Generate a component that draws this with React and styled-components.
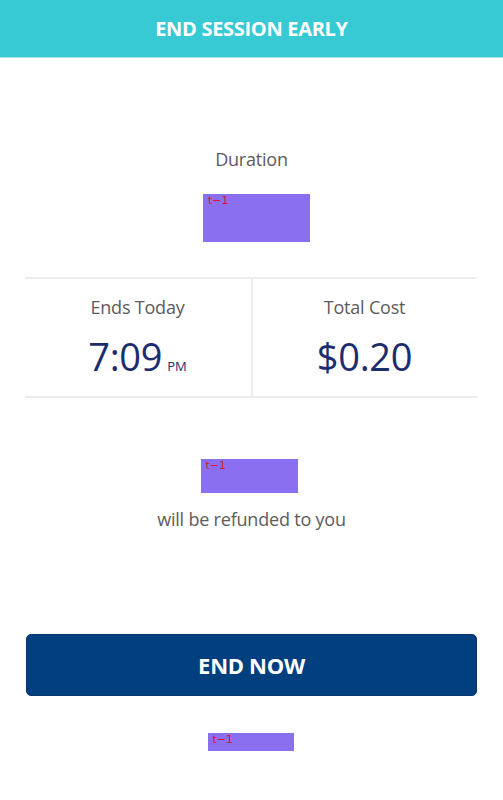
import React from 'react';
import styled, { createGlobalStyle } from 'styled-components';

const Global = createGlobalStyle`
  body {
    margin: 0;
    background: #ffffff;
    font-family: "Open Sans", "Noto Sans", sans-serif;
  }
`;

const Page = styled.div`
  width: 503px;
  min-height: 800px;
  display: flex;
  flex-direction: column;
  align-items: center;
`;

const Header = styled.div`
  width: 100%;
  height: 58px;
  background: #37c9d4;
  border-bottom: 1px solid #a6e6ea;
  box-sizing: border-box;
  display: flex;
  align-items: center;
  justify-content: center;
  color: #ffffff;
  font-weight: 700;
  font-size: 20px;
  letter-spacing: -0.3px;
`;

const Label = styled.div`
  color: #5c5c5c;
  font-size: 18px;
  line-height: 24px;
  letter-spacing: -0.2px;
  margin-top: ${p => p.$top || 0}px;
`;

const Masked = styled.div`
  width: ${p => p.$w}px;
  height: ${p => p.$h}px;
  background: #8a70f0;
  margin-top: ${p => p.$top}px;
  margin-left: ${p => p.$shift || 0}px;
  box-sizing: border-box;
  padding: 1px 0 0 5px;
  color: #e0102a;
  font-family: "DejaVu Sans", sans-serif;
  font-size: 11px;
  line-height: 12px;
`;

const Stats = styled.div`
  width: 452px;
  margin-top: 35px;
  margin-left: -2px;
  height: 121px;
  display: grid;
  grid-template-columns: 1fr 1fr;
  border-top: 2px solid #ececec;
  border-bottom: 2px solid #ececec;
  box-sizing: border-box;
`;

const Cell = styled.div`
  display: flex;
  flex-direction: column;
  align-items: center;
  padding-top: 16px;
  border-left: ${p => (p.$divided ? '2px solid #ececec' : 'none')};
`;

const Value = styled.div`
  color: #1c2d6e;
  font-size: 38px;
  line-height: 46px;
  margin-top: 14px;
  letter-spacing: -0.3px;
  display: flex;
  align-items: baseline;
`;

const Suffix = styled.span`
  font-size: 13px;
  margin-left: 5px;
  letter-spacing: 0;
`;

const Button = styled.button`
  width: 451px;
  height: 62px;
  margin-top: 103px;
  background: #023f7f;
  border: 1px solid #0a3470;
  border-radius: 5px;
  color: #ffffff;
  font-family: "Open Sans", sans-serif;
  font-weight: 700;
  font-size: 22px;
  letter-spacing: -0.3px;
`;

export default function App() {
  return (
    <Page>
      <Global />
      <Header>END SESSION EARLY</Header>
      <Label $top={89}>Duration</Label>
      <Masked $w={107} $h={48} $top={23} $shift={10}>t−1</Masked>
      <Stats>
        <Cell>
          <Label>Ends Today</Label>
          <Value>
            7:09<Suffix>PM</Suffix>
          </Value>
        </Cell>
        <Cell $divided>
          <Label>Total Cost</Label>
          <Value>$0.20</Value>
        </Cell>
      </Stats>
      <Masked $w={97} $h={34} $top={61} $shift={-5}>t−1</Masked>
      <Label $top={14}>will be refunded to you</Label>
      <Button>END NOW</Button>
      <Masked $w={86} $h={18} $top={37} $shift={-2}>t−1</Masked>
    </Page>
  );
}
